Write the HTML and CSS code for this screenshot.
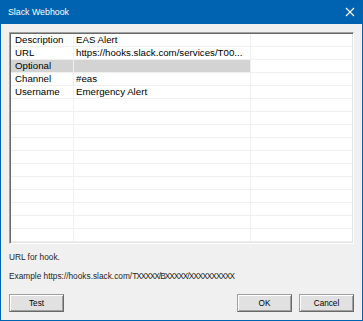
FILE: index.html
```html
<!DOCTYPE html>
<html lang="en">
<head>
  <meta charset="UTF-8">
  <title>Slack Webhook</title>
  <link rel="stylesheet" href="styles.css">
</head>
<body>
  <div class="window">
    <div class="titlebar">
      <span class="title">Slack Webhook</span>
      <svg class="close" width="10" height="10" viewBox="0 0 10 10">
        <path d="M1 1 L9 9 M9 1 L1 9" stroke="#fff" stroke-width="1.1" fill="none"/>
      </svg>
    </div>
    <div class="content">
      <div class="grid" id="grid"></div>
      <p class="help">URL for hook.</p>
      <p class="help">Example https://hooks.slack.com/<span class="code">TXXXXX/BXXXXX/XXXXXXXXXX</span></p>
      <div class="buttons">
        <button class="btn">Test</button>
        <span class="spacer"></span>
        <button class="btn">OK</button>
        <button class="btn">Cancel</button>
      </div>
    </div>
  </div>

  <script>
    // property rows, the rest of the list is empty
    const rows = [
      ["Description", "EAS Alert"],
      ["URL", "https://hooks.slack.com/services/T00..."],
      ["Optional", "", true],
      ["Channel", "#eas"],
      ["Username", "Emergency Alert"]
    ];
    const grid = document.getElementById('grid');
    for (let i = 0; i < 16; i++) {
      const r = rows[i] || ["", ""];
      const row = document.createElement('div');
      row.className = 'row' + (r[2] ? ' category' : '');
      row.innerHTML = `<div class="cell name">${r[0]}</div><div class="cell value">${r[1]}</div><div class="cell extra"></div>`;
      grid.appendChild(row);
    }
  </script>
</body>
</html>
```

FILE: styles.css
```css
body {
  margin: 0;
  font-family: "Liberation Sans", Arial, sans-serif;
  font-size: 9.7px;
  color: #000;
  background: #f0f0f0;
}
.window {
  width: 363px;
  height: 321px;
  box-sizing: border-box;
  border: 1px solid #0063b1;
  border-top: none;
  background: #f0f0f0;
  display: flex;
  flex-direction: column;
}
.titlebar {
  height: 23px;
  margin: 0 -1px;
  background: #0063b1;
  color: #fff;
  display: flex;
  align-items: center;
  padding: 0 7px 1px 8px;
  font-size: 8.8px;
}
.title {
  flex: 1;
}
.close {
  margin-right: 1px;
}
.content {
  flex: 1;
  padding: 8px 8px 0 8px;
}
.grid {
  height: 212px;
  box-sizing: border-box;
  background: #fff;
  border-top: 1px solid #a0a0a0;
  border-left: 1px solid #a0a0a0;
  border-right: 1px solid #fff;
  border-bottom: 1px solid #fff;
  box-shadow: inset 1px 1px #696969, inset -1px -1px #e3e3e3;
  padding: 1px 1px 0 1px;
  overflow: hidden;
}
.row {
  display: grid;
  grid-template-columns: 63px 177px 1fr;
  height: 13px;
}
.cell {
  border-right: 1px solid #f0f0f0;
  border-bottom: 1px solid #f0f0f0;
  line-height: 12px;
  white-space: nowrap;
  overflow: hidden;
}
.cell.extra {
  border-right: none;
}
.name {
  padding-left: 4px;
}
.value {
  padding-left: 2px;
}
.category .name,
.category .value {
  background: #d3d3d3;
}
.help {
  margin: 7px 0 0 0;
  font-size: 8.3px;
  line-height: 12px;
  color: #1e1e1e;
  white-space: nowrap;
}
.code {
  letter-spacing: -1px;
}
.buttons {
  display: flex;
  margin-top: 12px;
  gap: 7px;
}
.spacer {
  flex: 1;
}
.btn {
  width: 55px;
  height: 18px;
  padding: 0;
  font-family: inherit;
  font-size: 8.2px;
  color: #000;
  background: #e1e1e1;
  border: 1px solid #a0a0a0;
  border-right-color: #696969;
  border-bottom-color: #696969;
  box-shadow: inset 1px 1px #fff, inset -1px -1px #a0a0a0;
}
```
